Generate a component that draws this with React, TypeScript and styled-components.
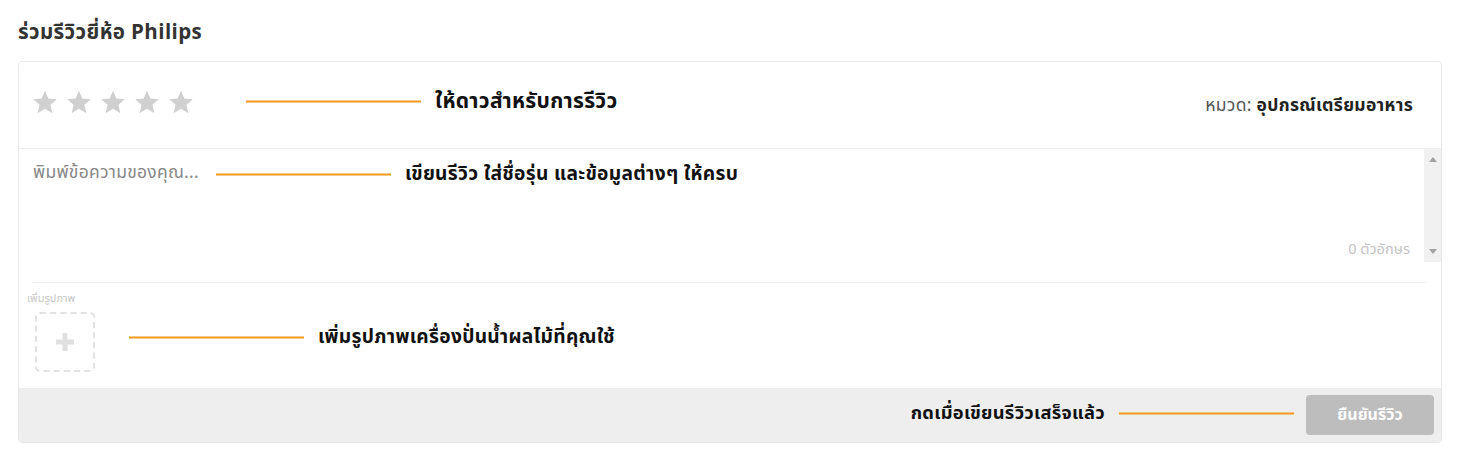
import styled, { createGlobalStyle } from "styled-components";

const GlobalStyle = createGlobalStyle`
  body {
    margin: 0;
    background: #fff;
    font-family: "Noto Sans Thai", "Noto Sans", "Liberation Sans", sans-serif;
    color: #222;
  }
`;

const Page = styled.div`
  padding: 20px 18px 0 18px;
  width: 1424px;
`;

const Title = styled.h2`
  margin: 0 0 15px 0;
  font-size: 20.5px;
  line-height: 26px;
  font-weight: 700;
  letter-spacing: 0.4px;
  color: #333;
`;

const Card = styled.div`
  position: relative;
  border: 1px solid #e8e8e8;
  border-radius: 4px;
  overflow: hidden;
  background: #fff;
`;

const Header = styled.div`
  height: 86px;
  padding: 0 28px 0 13px;
  display: flex;
  align-items: center;
  justify-content: space-between;
  border-bottom: 1px solid #eee;
`;

const Stars = styled.div`
  display: flex;
  gap: 8px;
  margin-top: -6px;
`;

const Category = styled.div`
  font-size: 17.5px;
  letter-spacing: 0.3px;
  color: #555;
  span {
    color: #222;
    font-weight: 700;
  }
`;

const TextWrap = styled.div`
  position: relative;
  height: 113px;
  display: flex;
`;

const TextArea = styled.textarea`
  flex: 1;
  display: block;
  box-sizing: border-box;
  height: 113px;
  border: none;
  resize: none;
  outline: none;
  overflow: hidden;
  padding: 13px 14px;
  font-family: inherit;
  font-size: 17.5px;
  letter-spacing: 0.25px;
  line-height: 22px;
  &::placeholder {
    color: #888;
  }
`;

const ScrollTrack = styled.div`
  width: 17px;
  background: #f1f1f1;
  display: flex;
  flex-direction: column;
  justify-content: space-between;
  align-items: center;
  padding: 8px 0 8px 0;
`;

const Arrow = styled.div<{ $down?: boolean }>`
  width: 0;
  height: 0;
  border-left: 4.5px solid transparent;
  border-right: 4.5px solid transparent;
  ${(p) =>
    p.$down ? "border-top: 5px solid #a3a3a3;" : "border-bottom: 5px solid #a3a3a3;"}
`;

const Counter = styled.div`
  position: absolute;
  right: 31px;
  bottom: 1px;
  font-size: 14.5px;
  color: #c4c4c4;
`;

const Divider = styled.hr`
  margin: 20px 14px 0 14px;
  border: none;
  border-top: 1px solid #eee;
`;

const PhotoSection = styled.div`
  padding: 9px 8px 16px 8px;
  display: flex;
  flex-direction: column;
  gap: 6px;
`;

const PhotoLabel = styled.div`
  font-size: 11px;
  line-height: 14px;
  color: #c8c8c8;
`;

const UploadBox = styled.div`
  margin-left: 8px;
  width: 56px;
  height: 56px;
  border: 2px dashed #e2e2e2;
  border-radius: 5px;
  display: flex;
  align-items: center;
  justify-content: center;
`;

const Footer = styled.div`
  height: 54px;
  background: #eee;
  display: flex;
  align-items: center;
  justify-content: flex-end;
  padding-right: 7px;
`;

const SubmitButton = styled.button`
  width: 128px;
  height: 40px;
  border: none;
  border-radius: 4px;
  background: #bdbdbd;
  color: #fff;
  font-family: inherit;
  font-size: 16px;
  font-weight: 700;
`;

const Note = styled.div<{ $left?: number; $right?: number; $y: number; $size: number }>`
  position: absolute;
  ${(p) => (p.$right !== undefined ? `right: ${p.$right}px;` : `left: ${p.$left}px;`)}
  top: ${(p) => p.$y}px;
  transform: translateY(-50%);
  display: flex;
  align-items: center;
  gap: 14px;
  flex-direction: ${(p) => (p.$right !== undefined ? "row-reverse" : "row")};
  font-size: ${(p) => p.$size}px;
  font-weight: 700;
  letter-spacing: 0.3px;
  color: #111;
  white-space: nowrap;
  &::before {
    content: "";
    display: block;
    width: 175px;
    height: 2px;
    background: #f39a1e;
  }
`;

const Star = () => (
  <svg width="26" height="26" viewBox="0 0 24 24">
    <path
      d="M12 1.5l3.1 7.2 7.8.7-5.9 5.2 1.8 7.7L12 18.2l-6.8 4.1 1.8-7.7L1.1 9.4l7.8-.7z"
      fill="#d0d0d0"
    />
  </svg>
);

const Plus = () => (
  <svg width="20" height="20" viewBox="0 0 20 20">
    <rect x="7.5" y="1" width="5" height="18" fill="#e0e0e0" />
    <rect x="1" y="7.5" width="18" height="5" fill="#e0e0e0" />
  </svg>
);

const App = () => {
  return (
    <Page>
      <GlobalStyle />
      <Title>ร่วมรีวิวยี่ห้อ Philips</Title>
      <Card>
        <Header>
          <Stars>
            {[0, 1, 2, 3, 4].map((i) => (
              <Star key={i} />
            ))}
          </Stars>
          <Category>
            หมวด: <span>อุปกรณ์เตรียมอาหาร</span>
          </Category>
        </Header>
        <TextWrap>
          <TextArea placeholder="พิมพ์ข้อความของคุณ..." />
          <ScrollTrack>
            <Arrow />
            <Arrow $down />
          </ScrollTrack>
          <Counter>0 ตัวอักษร</Counter>
        </TextWrap>
        <Divider />
        <PhotoSection>
          <PhotoLabel>เพิ่มรูปภาพ</PhotoLabel>
          <UploadBox>
            <Plus />
          </UploadBox>
        </PhotoSection>
        <Footer>
          <SubmitButton>ยืนยันรีวิว</SubmitButton>
        </Footer>
        <Note $left={227} $y={39} $size={21}>
          ให้ดาวสำหรับการรีวิว
        </Note>
        <Note $left={197} $y={112} $size={19.2}>
          เขียนรีวิว ใส่ชื่อรุ่น และข้อมูลต่างๆ ให้ครบ
        </Note>
        <Note $left={110} $y={275} $size={19.2}>
          เพิ่มรูปภาพเครื่องปั่นน้ำผลไม้ที่คุณใช้
        </Note>
        <Note $right={147} $y={351} $size={18.3}>
          กดเมื่อเขียนรีวิวเสร็จแล้ว
        </Note>
      </Card>
    </Page>
  );
};

export default App;
